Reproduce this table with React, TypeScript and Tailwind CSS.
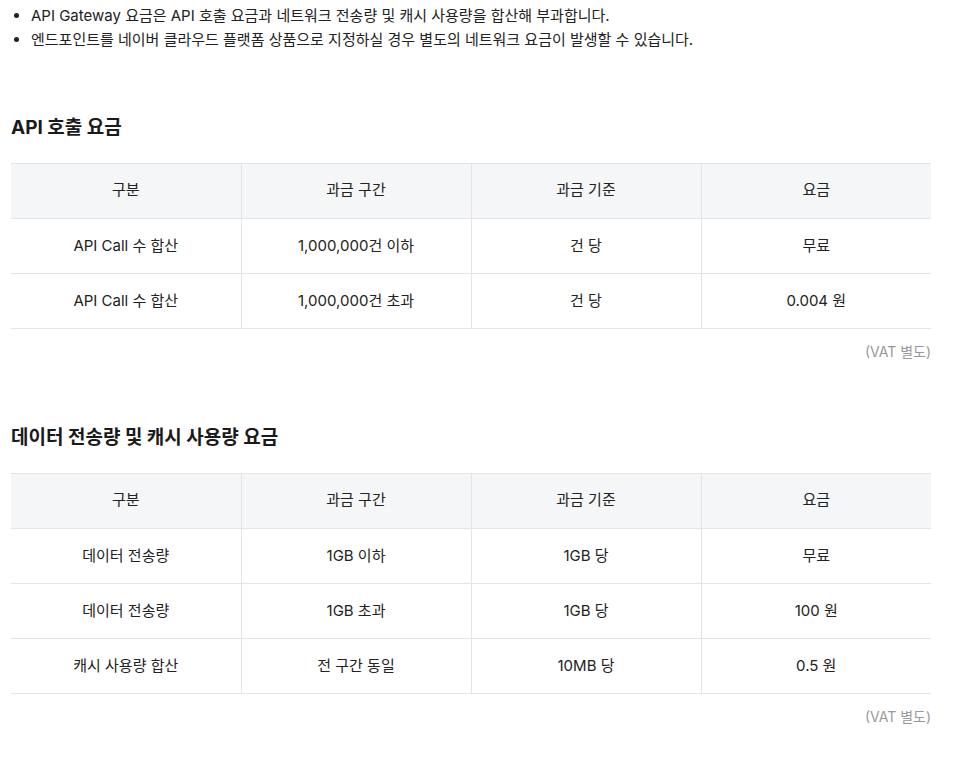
const notes = [
  'API Gateway 요금은 API 호출 요금과 네트워크 전송량 및 캐시 사용량을 합산해 부과합니다.',
  '엔드포인트를 네이버 클라우드 플랫폼 상품으로 지정하실 경우 별도의 네트워크 요금이 발생할 수 있습니다.',
]

const headers = ['구분', '과금 구간', '과금 기준', '요금']

const apiRows = [
  ['API Call 수 합산', '1,000,000건 이하', '건 당', '무료'],
  ['API Call 수 합산', '1,000,000건 초과', '건 당', '0.004 원'],
]

const dataRows = [
  ['데이터 전송량', '1GB 이하', '1GB 당', '무료'],
  ['데이터 전송량', '1GB 초과', '1GB 당', '100 원'],
  ['캐시 사용량 합산', '전 구간 동일', '10MB 당', '0.5 원'],
]

function PriceTable({ title, rows }: { title: string; rows: string[][] }) {
  return (
    <section className="mt-[62px]">
      <h3 className="text-[19px] leading-[28px] font-bold text-[#1a1a1a]">{title}</h3>
      <table className="mt-[21px] w-full table-fixed border-collapse text-[15px] leading-[20px] text-[#222]">
        <thead>
          <tr className="bg-[#f5f6f8] border-y border-[#e4e4e6]">
            {headers.map((h, i) => (
              <th
                key={h}
                className={`h-[55px] pb-[2px] font-normal text-center ${i > 0 ? 'border-l border-[#e4e4e6]' : ''}`}
              >
                {h}
              </th>
            ))}
          </tr>
        </thead>
        <tbody>
          {rows.map((r, ri) => (
            <tr key={ri} className="border-b border-[#e4e4e6]">
              {r.map((c, i) => (
                <td
                  key={i}
                  className={`h-[55px] pb-[1px] text-center ${i > 0 ? 'border-l border-[#e4e4e6]' : ''}`}
                >
                  {c}
                </td>
              ))}
            </tr>
          ))}
        </tbody>
      </table>
      <p className="mt-[13px] text-right text-[14px] leading-[20px] text-[#999]">(VAT 별도)</p>
    </section>
  )
}

export default function App() {
  return (
    <div
      className="w-[942px] px-[11px] pt-[4px] bg-white"
      style={{ fontFamily: 'Inter, "Noto Sans CJK KR", sans-serif' }}
    >
      <ul className="list-disc pl-[20px] text-[15px] leading-[24px] text-[#222]">
        {notes.map(n => (
          <li key={n}>{n}</li>
        ))}
      </ul>
      <PriceTable title="API 호출 요금" rows={apiRows} />
      <PriceTable title="데이터 전송량 및 캐시 사용량 요금" rows={dataRows} />
    </div>
  )
}
